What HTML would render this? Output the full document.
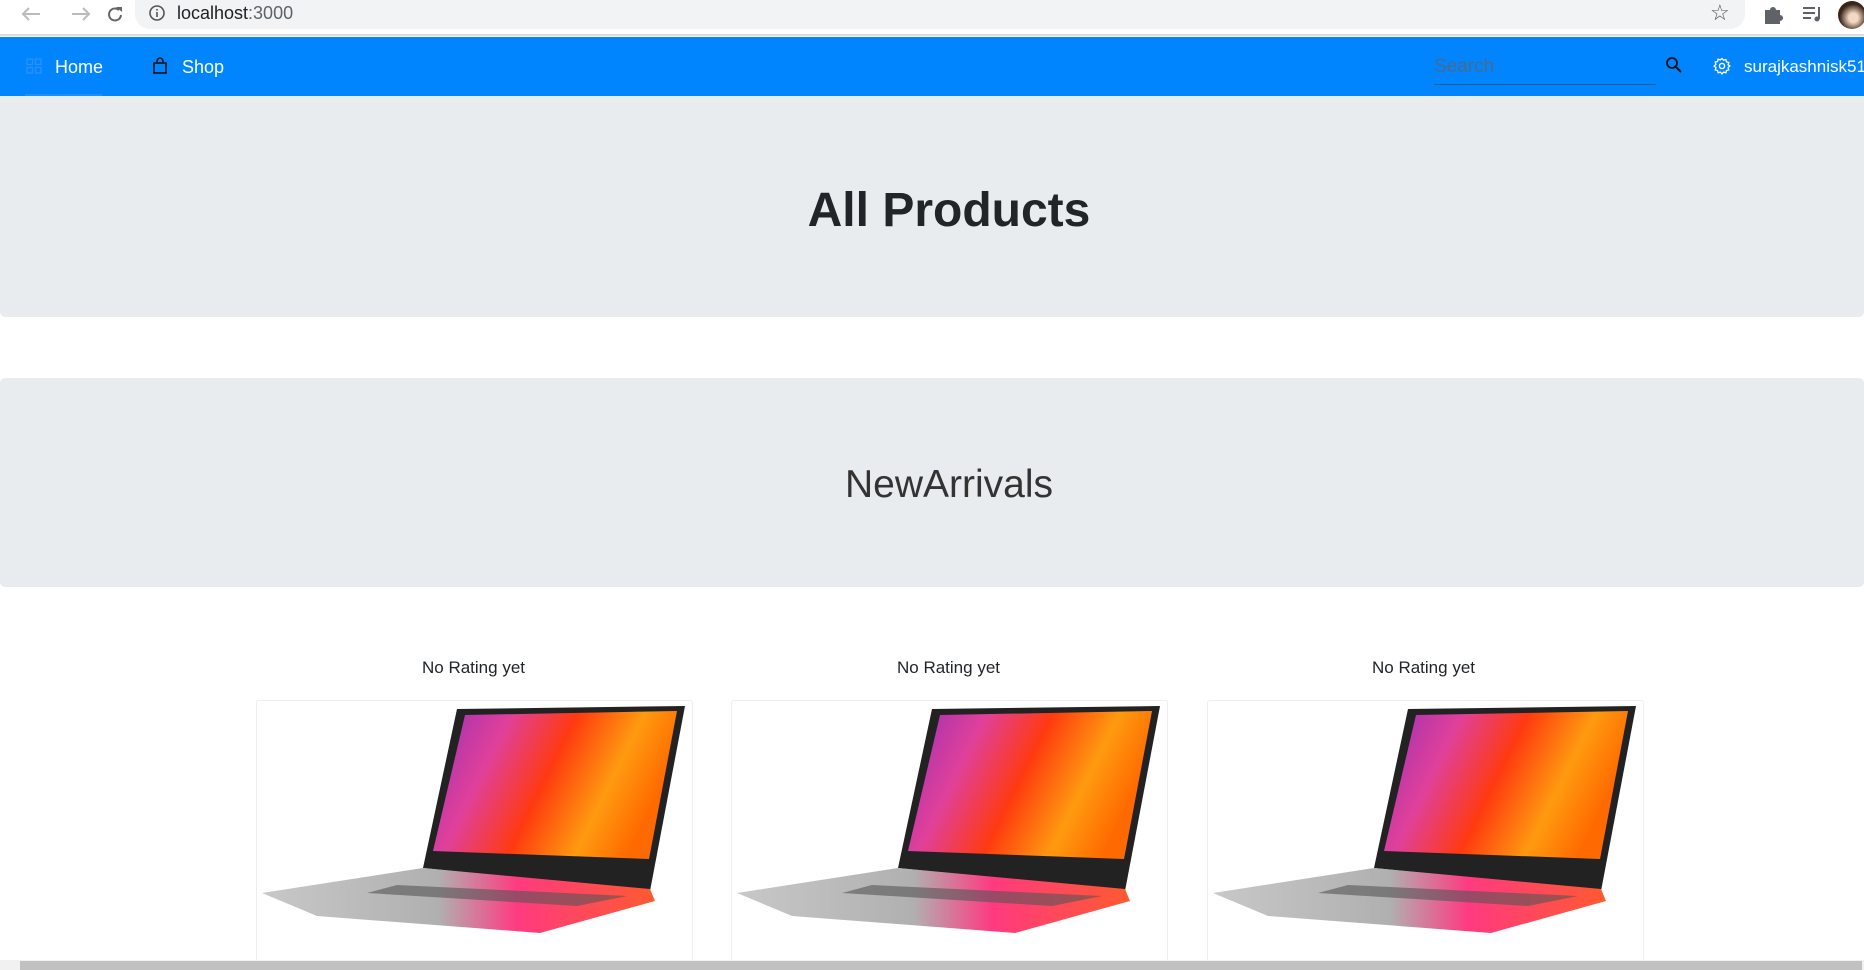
<!DOCTYPE html>
<html><head><meta charset="utf-8"><style>
*{margin:0;padding:0;box-sizing:border-box}
body{width:1864px;height:970px;overflow:hidden;position:relative;font-family:"Liberation Sans",sans-serif;background:#fff;color:#212529}
.abs{position:absolute}
</style></head><body>
<div class="abs" style="left:0;top:0;width:1864px;height:36px;background:#fff;border-bottom:2px solid #dadce0"></div>
<div class="abs" style="left:135px;top:0;width:1610px;height:29px;background:#f1f3f4;border-radius:0 0 15px 15px"></div>
<svg class="abs" style="left:14px;top:2px" width="120" height="26" viewBox="0 0 120 26">
<g fill="none" stroke="#bbb" stroke-width="2"><path d="M26 12H9M15 6l-6 6 6 6"/><path d="M58 12h17M69 6l6 6-6 6"/></g>
<path d="M105 8a6 6 0 1 0 2 5" fill="none" stroke="#666" stroke-width="2"/><path d="M102 5l6 0 0 5z" fill="#666"/>
</svg>
<svg class="abs" style="left:148px;top:4px" width="20" height="20"><circle cx="9" cy="9" r="7" fill="none" stroke="#555" stroke-width="1.6"/><rect x="8.2" y="8" width="1.6" height="5" fill="#555"/><rect x="8.2" y="5" width="1.6" height="1.6" fill="#555"/></svg>
<div class="abs" style="left:177px;top:3px;font-size:18px;color:#202124">localhost<span style="color:#5f6368">:3000</span></div>
<div class="abs" style="left:1710px;top:0;font-size:22px;color:#555">☆</div>
<svg class="abs" style="left:1762px;top:3px" width="22" height="22"><path d="M3 7h5a3 3 0 0 1 6 0h4v5a3 3 0 0 1 0 6v3H3z" fill="#5f6368"/></svg>
<svg class="abs" style="left:1802px;top:4px" width="22" height="20"><g stroke="#5f6368" stroke-width="2"><path d="M1 4h12M1 9h12M1 14h8"/><path d="M17 3v12"/></g><circle cx="15" cy="15" r="2.5" fill="#5f6368"/></svg>
<div class="abs" style="left:1838px;top:1px;width:28px;height:28px;border-radius:50%;background:radial-gradient(circle at 55% 60%,#f3d9c4 20%,#3a2418 60%)"></div>

<div class="abs" style="left:0;top:37px;width:1864px;height:59px;background:#0085ff"></div>
<svg class="abs" style="left:26px;top:58px" width="16" height="16"><g fill="none" stroke="#2b8fff" stroke-width="1.3"><rect x="1" y="1" width="5.5" height="5.5"/><rect x="9.5" y="1" width="5.5" height="5.5"/><rect x="1" y="9.5" width="5.5" height="5.5"/><rect x="9.5" y="9.5" width="5.5" height="5.5"/></g></svg>
<div class="abs" style="left:55px;top:57px;font-size:18px;color:#fff">Home</div>
<div class="abs" style="left:25px;top:94px;width:77px;height:2px;background:#1890ff"></div>
<svg class="abs" style="left:152px;top:57px" width="16" height="18"><path d="M2 6h12v10H2z" fill="none" stroke="#111" stroke-width="1.6"/><path d="M5 6V4a3 3 0 0 1 6 0v2" fill="none" stroke="#111" stroke-width="1.6"/></svg>
<div class="abs" style="left:182px;top:57px;font-size:18px;color:#fff">Shop</div>
<div class="abs" style="left:1434px;top:56px;font-size:19px;color:#4a6a8a">Search</div>
<div class="abs" style="left:1434px;top:84px;width:222px;height:1px;background:#1c5f9e"></div>
<svg class="abs" style="left:1665px;top:56px" width="18" height="18"><circle cx="7" cy="7" r="5" fill="none" stroke="#111" stroke-width="1.8"/><path d="M11 11l5 5" stroke="#111" stroke-width="2"/></svg>
<svg class="abs" style="left:1713px;top:57px" width="18" height="18" viewBox="0 0 18 18"><circle cx="9" cy="9" r="2.6" fill="none" stroke="#fff" stroke-width="1.4"/><path d="M9 1.5l1.6 1.8 2.3-.7.6 2.3 2.3.6-.7 2.3L16.9 9l-1.8 1.6.7 2.3-2.3.6-.6 2.3-2.3-.7L9 16.9l-1.6-1.8-2.3.7-.6-2.3-2.3-.6.7-2.3L1.1 9l1.8-1.6-.7-2.3 2.3-.6.6-2.3 2.3.7z" fill="none" stroke="#fff" stroke-width="1.3"/></svg>
<div class="abs" style="left:1744px;top:57px;font-size:17px;color:#fff;white-space:nowrap">surajkashnisk51</div>

<div class="abs" style="left:0;top:96px;width:1864px;height:221px;background:#e9ecef;border-radius:0 0 5px 5px"></div>
<div class="abs" style="left:0;top:183px;width:1898px;text-align:center;font-size:48px;font-weight:bold;color:#212529">All Products</div>
<div class="abs" style="left:0;top:378px;width:1864px;height:209px;background:#e9ecef;border-radius:5px"></div>
<div class="abs" style="left:0;top:463px;width:1898px;text-align:center;font-size:39px;font-weight:300;color:#333">NewArrivals</div>

<svg width="0" height="0" style="position:absolute"><defs>
<linearGradient id="scr" x1="0" y1="0" x2="1" y2="0.3"><stop offset="0" stop-color="#9a2fb5"/><stop offset="0.3" stop-color="#e0409a"/><stop offset="0.55" stop-color="#ff3a10"/><stop offset="0.8" stop-color="#ff9a10"/><stop offset="1" stop-color="#ff6a00"/></linearGradient>
<linearGradient id="base" x1="0" y1="0" x2="1" y2="0"><stop offset="0" stop-color="#c8c8c8"/><stop offset="0.45" stop-color="#b0b0b0"/><stop offset="0.65" stop-color="#ff3a80"/><stop offset="1" stop-color="#ff5a30"/></linearGradient>
</defs></svg>
<div class="abs" style="left:0;top:658px;width:1864px;font-size:17px;color:#212529">
<span class="abs" style="left:422px;white-space:nowrap">No Rating yet</span>
<span class="abs" style="left:897px;white-space:nowrap">No Rating yet</span>
<span class="abs" style="left:1372px;white-space:nowrap">No Rating yet</span>
</div>
<div class="abs" style="left:256px;top:700px;width:437px;height:270px;border:1px solid #eee;border-radius:3px"><svg width="437" height="240"><polygon points="200,8 428,5 393,190 166,167" fill="#222"/><polygon points="208,14 420,10 392,158 176,150" fill="url(#scr)"/><polygon points="166,167 393,188 398,200 283,232 60,215 5,192" fill="url(#base)"/><polygon points="140,184 370,195 320,205 110,192" fill="#555" opacity=".6"/></svg></div>
<div class="abs" style="left:731px;top:700px;width:437px;height:270px;border:1px solid #eee;border-radius:3px"><svg width="437" height="240"><polygon points="200,8 428,5 393,190 166,167" fill="#222"/><polygon points="208,14 420,10 392,158 176,150" fill="url(#scr)"/><polygon points="166,167 393,188 398,200 283,232 60,215 5,192" fill="url(#base)"/><polygon points="140,184 370,195 320,205 110,192" fill="#555" opacity=".6"/></svg></div>
<div class="abs" style="left:1207px;top:700px;width:437px;height:270px;border:1px solid #eee;border-radius:3px"><svg width="437" height="240"><polygon points="200,8 428,5 393,190 166,167" fill="#222"/><polygon points="208,14 420,10 392,158 176,150" fill="url(#scr)"/><polygon points="166,167 393,188 398,200 283,232 60,215 5,192" fill="url(#base)"/><polygon points="140,184 370,195 320,205 110,192" fill="#555" opacity=".6"/></svg></div>

<div class="abs" style="left:0;top:960px;width:1864px;height:10px;background:#f1f1f1"></div>
<div class="abs" style="left:20px;top:961px;width:1842px;height:9px;background:#c1c1c1"></div>
</body></html>
